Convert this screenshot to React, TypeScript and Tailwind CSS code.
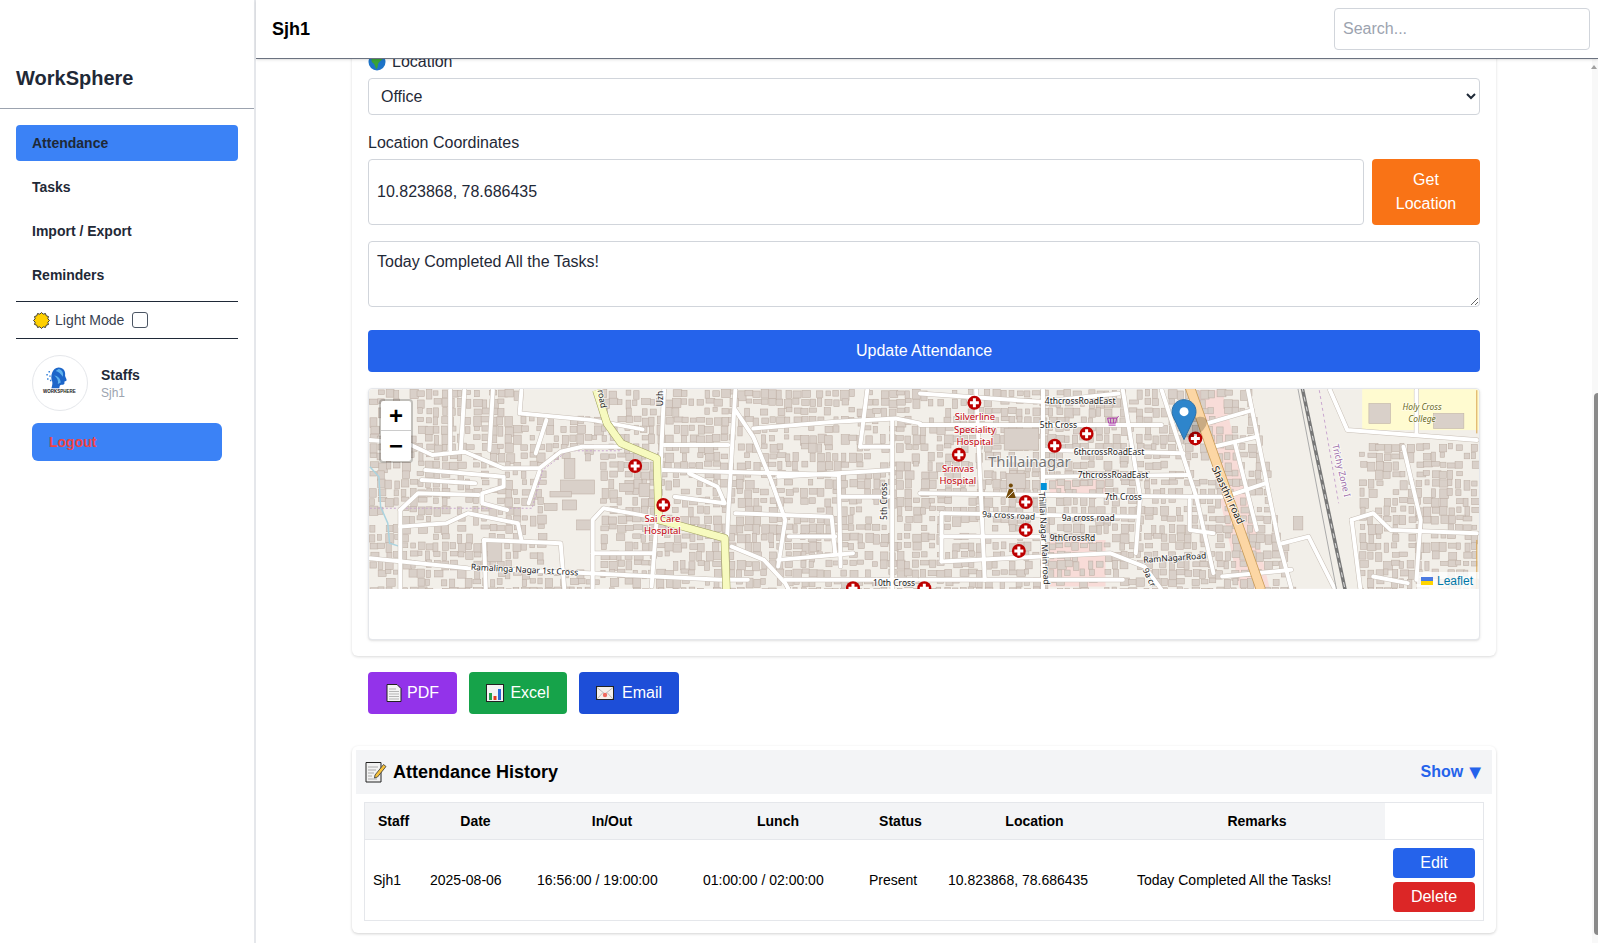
import React from "react";

const z2 = (p: number[]) => {
  const out: number[] = [];
  for (let i = 0; i < p.length; i += 2) out.push(p[i] / 2.8 - 8, p[i + 1] / 3 - 9);
  return out;
};
const z3 = (p: number[]) => {
  const out: number[] = [];
  for (let i = 0; i < p.length; i += 2) out.push(p[i] / 2.3127 + 552, p[i + 1] / 3 - 9);
  return out;
};
const box2 = (x: number, y: number, w: number, h: number) => [x / 2.8 - 8, y / 3 - 9, w / 2.8, h / 3];
const box3 = (x: number, y: number, w: number, h: number) => [x / 2.3127 + 552, y / 3 - 9, w / 2.3127, h / 3];
const toD = (p: number[]) => {
  let d = "";
  for (let i = 0; i < p.length; i += 2) d += (i === 0 ? "M" : "L") + p[i].toFixed(1) + " " + p[i + 1].toFixed(1);
  return d;
};

const roads: number[][] = [
  z2([450, 100, 650, 120, 790, 148]),
  z2([25, 180, 130, 190, 200, 225, 290, 215, 400, 265, 500, 265, 560, 215, 620, 200, 730, 200]),
  z2([25, 535, 300, 565, 640, 580, 1010, 600, 1085, 600]),
  z2([850, 195, 1030, 195]),
  z2([845, 270, 1340, 285]),
  z2([1100, 145, 1330, 125, 1500, 115, 1568, 130]),
  z2([1050, 30, 1030, 400, 1020, 630]),
  z2([1050, 90, 1100, 170, 1150, 300, 1190, 420, 1170, 560]),
  z2([1040, 500, 1130, 540, 1190, 610, 1200, 630]),
  z2([1190, 600, 1560, 600]),
  z2([1490, 120, 1490, 625]),
  z2([650, 625, 650, 420, 680, 385, 810, 410, 1020, 470]),
  z2([650, 520, 820, 520]),
  z2([345, 480, 560, 490, 570, 625]),
  z2([345, 480, 350, 625]),
  z2([110, 390, 110, 625]),
  z2([110, 440, 240, 430, 300, 400, 440, 430, 450, 480]),
  z2([250, 30, 250, 210]),
  z2([370, 30, 360, 210]),
  z2([290, 30, 280, 210]),
  z2([450, 30, 445, 100]),
  z2([520, 120, 490, 220]),
  z2([170, 300, 320, 310]),
  z2([180, 270, 400, 290, 400, 320, 340, 340, 340, 370, 410, 390]),
  z2([110, 390, 160, 340, 330, 345]),
  z2([500, 275, 470, 370]),
  z2([1050, 400, 1320, 410, 1330, 520]),
  z2([1170, 540, 1380, 520]),
  z2([1345, 350, 1480, 350]),
  z2([1400, 200, 1490, 200]),
  z2([1170, 290, 1490, 270]),
  z2([1200, 470, 1330, 470]),
  z2([850, 30, 840, 270, 815, 620]),
  z2([920, 280, 1000, 320, 1020, 370, 880, 350]),
  z2([1340, 285, 1345, 560]),
  z2([1420, 30, 1400, 200]),
  z3([0, 40, 280, 65, 460, 40]),
  z3([0, 135, 560, 135]),
  z3([0, 340, 620, 350, 700, 350]),
  z3([290, 210, 610, 220]),
  z3([290, 290, 620, 285]),
  z3([50, 400, 500, 410]),
  z3([50, 400, 50, 545]),
  z3([50, 470, 280, 470]),
  z3([50, 545, 440, 520, 520, 560, 560, 630]),
  z3([0, 600, 470, 600]),
  z3([130, 30, 150, 600]),
  z3([285, 30, 285, 625]),
  z3([470, 30, 510, 350, 500, 520]),
  z3([560, 30, 640, 350, 680, 580]),
  z3([665, 130, 770, 90]),
  z3([680, 200, 780, 170]),
  z3([720, 345, 800, 310]),
  z3([760, 30, 830, 480, 860, 625]),
  z3([730, 190, 780, 450]),
  z3([950, 30, 990, 150, 1290, 180]),
  z3([1120, 200, 1160, 420, 1150, 600]),
  z3([1000, 420, 1050, 400, 1090, 450, 1290, 460]),
  z3([1000, 420, 1020, 625]),
  z3([840, 490, 900, 470, 960, 625]),
  z3([700, 590, 860, 570]),
  z3([1050, 590, 1130, 610]),
  z3([1150, 30, 1150, 160]),
  z3([625, 360, 625, 450, 680, 460]),
];

const buildExcluded = (x: number, y: number) => {
  const railL = 881 + 43 * (y / 200);
  if (x > railL && x < 992) return true;
  if (x > 170 && x < 226 && y > 70 && y < 180) return true;
  if (x > 992 && y < 50) return true;
  if (x > 150 && x < 228 && y < 25) return true;
  return false;
};

const makeBuildings = () => {
  let seed = 4217;
  const rnd = () => {
    seed = (seed * 16807) % 2147483647;
    return seed / 2147483647;
  };
  const list: { x: number; y: number; w: number; h: number }[] = [];
  for (let y = 0; y < 200; y += 9) {
    for (let x = 0; x < 1112; x += 8) {
      if (rnd() < 0.24) continue;
      const w = 4 + rnd() * 5;
      const h = 4 + rnd() * 6;
      const bx = x + rnd() * 2;
      const by = y + rnd() * 2;
      if (buildExcluded(bx, by)) continue;
      list.push({ x: bx, y: by, w, h });
    }
  }
  return list;
};
const buildings = makeBuildings();

const bigBuildings = [
  box2(560, 300, 95, 42),
  box2(570, 235, 30, 60),
  box2(530, 335, 60, 16),
  box2(565, 360, 40, 30),
  box2(605, 420, 40, 30),
  box2(725, 310, 40, 25),
  box2(780, 310, 30, 40),
  box2(515, 370, 35, 22),
  box2(355, 485, 40, 60),
  box3(195, 145, 80, 65),
  box3(200, 280, 45, 45),
  box3(1040, 70, 50, 60),
  box3(1190, 100, 70, 45),
  box3(865, 410, 22, 40),
];

const hospitals = [
  z2([769, 258]),
  z2([848, 375]),
  z2([1380, 625]),
  z3([126, 68]),
  z3([386, 161]),
  z3([312, 197]),
  z3([90, 224]),
  z3([638, 175]),
  z3([245, 366]),
  z3([245, 450]),
  z3([229, 513]),
  z3([10, 625]),
];

const labels: { t: string; x: number; y: number; r?: number; s: number; c?: string }[] = [
  { t: "Ramalinga Nagar 1st Cross", x: 102, y: 181, r: 3, s: 8.5 },
  { t: "10th Cross", x: 505, y: 197, s: 8.5 },
  { t: "4thcrossRoadEast", x: 677, y: 15, s: 8.5 },
  { t: "5th Cross", x: 672, y: 39, s: 8.5 },
  { t: "6thcrossRoadEast", x: 706, y: 66, s: 8.5 },
  { t: "7thcrossRoadEast", x: 710, y: 89, s: 8.5 },
  { t: "7th Cross", x: 737, y: 111, s: 8.5 },
  { t: "9a cross road", x: 614, y: 128, r: 3, s: 8.5 },
  { t: "9a cross road", x: 694, y: 132, s: 8.5 },
  { t: "9thCrossRd", x: 682, y: 152, s: 8.5 },
  { t: "RamNagarRoad", x: 776, y: 174, r: -4, s: 8.5 },
  { t: "Shasthri road", x: 844, y: 79, r: 65, s: 10 },
  { t: "Thillai Nagar Main road", x: 671, y: 103, r: 87, s: 8.5 },
  { t: "5th Cross", x: 519, y: 131, r: -90, s: 8.5 },
  { t: "Uzh", x: 295, y: 17, r: -90, s: 8.5 },
  { t: "road", x: 229, y: 1, r: 80, s: 8.5 },
  { t: "9a cr", x: 775, y: 181, r: 65, s: 8.5 },
  { t: "Trichy Zone I", x: 965, y: 56, r: 77, s: 9, c: "#9a6aa8" },
];

const redLabels: { t: string; x: number; y: number }[] = [
  { t: "Silverline", x: 607, y: 31 },
  { t: "Speciality", x: 607, y: 44 },
  { t: "Hospital", x: 607, y: 56 },
  { t: "Srinvas", x: 590, y: 83 },
  { t: "Hospital", x: 590, y: 95 },
  { t: "Sai Care", x: 294, y: 133 },
  { t: "Hospital", x: 294, y: 145 },
];

const MapArt = () => (
  <svg viewBox="0 0 1112 200" className="block w-full h-full" style={{ fontFamily: "'Noto Sans', sans-serif" }}>
    <rect width="1112" height="200" fill="#f2efe9" />
    <path d={toD(z3([640, 30, 700, 30, 810, 625, 740, 625])) + "Z"} fill="#f8dcd8" />
    <path d={toD(z3([300, 300, 430, 300, 430, 340, 300, 340])) + "Z"} fill="#f8dcd8" />
    <path d={toD(z3([300, 480, 430, 480, 430, 620, 300, 620])) + "Z"} fill="#f8dcd8" />
    <rect x="995" width="117" height="41" fill="#fffbd0" />
    {buildings.map((b, i) => (
      <rect key={i} x={b.x} y={b.y} width={b.w} height={b.h} fill="#d9d0c9" stroke="#c0b2a8" strokeWidth="0.6" />
    ))}
    {bigBuildings.map((b, i) => (
      <rect key={i} x={b[0]} y={b[1]} width={b[2]} height={b[3]} fill="#d9d0c9" stroke="#c0b2a8" strokeWidth="0.6" />
    ))}
    <path d={toD(z2([25, 260, 50, 290, 55, 380, 75, 430, 80, 490, 110, 500]))} fill="none" stroke="#aad3df" strokeWidth="1.5" />
    <path d={toD(z2([25, 385, 480, 385, 510, 270, 580, 212, 730, 212]))} fill="none" stroke="#c9a7cf" strokeWidth="1" strokeDasharray="2 2" />
    <path d={toD(z3([925, 30, 970, 370]))} fill="none" stroke="#c9a7cf" strokeWidth="1" strokeDasharray="3 3" />
    {roads.map((r, i) => (
      <path key={"c" + i} d={toD(r)} fill="none" stroke="#c8bfb6" strokeWidth="5" strokeLinejoin="round" strokeLinecap="round" />
    ))}
    {roads.map((r, i) => (
      <path key={"r" + i} d={toD(r)} fill="none" stroke="#ffffff" strokeWidth="4" strokeLinejoin="round" strokeLinecap="round" />
    ))}
    <path d={toD(z2([660, 30, 690, 130, 730, 190, 830, 235, 835, 420, 1020, 475, 1025, 630]))} fill="none" stroke="#a0a060" strokeWidth="8" strokeLinejoin="round" />
    <path d={toD(z2([660, 30, 690, 130, 730, 190, 830, 235, 835, 420, 1020, 475, 1025, 630]))} fill="none" stroke="#f7fabf" strokeWidth="7" strokeLinejoin="round" />
    <path d={toD(z3([625, 20, 790, 630]))} fill="none" stroke="#c79a55" strokeWidth="10" />
    <path d={toD(z3([625, 20, 790, 630]))} fill="none" stroke="#fcd6a4" strokeWidth="8.5" />
    <path d={toD(z3([885, 20, 985, 630]))} fill="none" stroke="#777777" strokeWidth="3.5" />
    <path d={toD(z3([885, 20, 985, 630]))} fill="none" stroke="#dddddd" strokeWidth="1" strokeDasharray="5 5" />
    <path d={toD(z3([875, 20, 965, 630]))} fill="none" stroke="#aaaaaa" strokeWidth="1" />
    <path d={toD(z3([1290, 30, 1290, 160]))} fill="none" stroke="#d9a24a" strokeWidth="1" />
    <path d={toD(z3([1290, 480, 1290, 630]))} fill="none" stroke="#d9a24a" strokeWidth="1" />

    {labels.map((l, i) => (
      <text key={i} x={l.x} y={l.y} fontSize={l.s} fill={l.c || "#222"} stroke="#fff" strokeWidth="2" strokeOpacity="0.7" paintOrder="stroke" transform={l.r ? `rotate(${l.r} ${l.x} ${l.y})` : undefined}>
        {l.t}
      </text>
    ))}
    {redLabels.map((l, i) => (
      <text key={i} x={l.x} y={l.y} fontSize="9.5" textAnchor="middle" fill="#c4000c" stroke="#fff" strokeWidth="2" strokeOpacity="0.7" paintOrder="stroke">
        {l.t}
      </text>
    ))}
    <text x="620" y="78" fontSize="15" fill="#777" stroke="#fff" strokeWidth="2" strokeOpacity="0.7" paintOrder="stroke">
      Thillainagar
    </text>
    <text x="1055" y="21" fontSize="8.5" fontStyle="italic" textAnchor="middle" fill="#6a6a20" stroke="#fff" strokeWidth="1.5" strokeOpacity="0.6" paintOrder="stroke">
      Holy Cross
    </text>
    <text x="1055" y="33" fontSize="8.5" fontStyle="italic" textAnchor="middle" fill="#6a6a20" stroke="#fff" strokeWidth="1.5" strokeOpacity="0.6" paintOrder="stroke">
      College
    </text>

    {hospitals.map((h, i) => (
      <g key={i} transform={`translate(${h[0]} ${h[1]})`}>
        <circle r="7" fill="#bd0000" />
        <path d="M-1.5 -4.5H1.5V-1.5H4.5V1.5H1.5V4.5H-1.5V1.5H-4.5V-1.5H-1.5Z" fill="#fff" />
      </g>
    ))}
    {/* shop, police, bus stop */}
    <g transform="translate(740 27)" fill="none" stroke="#ac39ac" strokeWidth="1">
      <path d="M0 2H9L8 7H1ZM9 2L11 0M1 9H8M3 2V7M6 2V7" />
    </g>
    <g transform="translate(638 94)">
      <circle cx="5" cy="2.5" r="2" fill="#734a08" />
      <path d="M0 15L3 6H7L10 15Z" fill="#734a08" />
      <path d="M1 15L8 8" stroke="#fff" strokeWidth="1" />
    </g>
    <rect x="673" y="94" width="6" height="7" fill="#0092da" />

    {/* marker shadow + pin */}
    <ellipse cx="827" cy="38" rx="14" ry="8" fill="#000" opacity="0.2" transform="rotate(-35 827 38)" />
    <g transform="translate(804 10)">
      <path d="M12.5 0.5C5.6 0.5 0.5 5.8 0.5 12.5C0.5 15 1.3 16.9 2.2 18.8L12.5 40.5L22.8 18.8C23.7 16.9 24.5 15 24.5 12.5C24.5 5.8 19.4 0.5 12.5 0.5Z" fill="#2e85cb" stroke="#2a6fa8" strokeWidth="1" />
      <circle cx="12.5" cy="12.5" r="4.5" fill="#fff" />
    </g>
  </svg>
);

const Globe = () => (
  <svg viewBox="0 0 18 18" className="w-[18px] h-[18px]">
    <circle cx="9" cy="9" r="8.5" fill="#1e74c8" />
    <path d="M5 3C8 1 13 2 15 5C14 8 11 8 10 11C10 14 9 16 8 16C7 14 7 11 5 10C3 9 3 5 5 3Z" fill="#3aa336" />
  </svg>
);

const Sun = () => (
  <svg viewBox="0 0 18 18" className="w-[17px] h-[17px]">
    <path d="M9 0.5L10.8 2.3L13.2 1.6L14 4L16.4 4.8L15.7 7.2L17.5 9L15.7 10.8L16.4 13.2L14 14L13.2 16.4L10.8 15.7L9 17.5L7.2 15.7L4.8 16.4L4 14L1.6 13.2L2.3 10.8L0.5 9L2.3 7.2L1.6 4.8L4 4L4.8 1.6L7.2 2.3Z" fill="#ffd000" stroke="#333" strokeWidth="1" />
  </svg>
);

const PageIcon = () => (
  <svg viewBox="0 0 16 18" className="w-[16px] h-[18px]">
    <path d="M1 .5H11L15 4.5V17.5H1Z" fill="#f4f4f4" stroke="#222" />
    <path d="M3 5H10M3 7.5H13M3 10H13M3 12.5H13M3 15H13" stroke="#b5b5b5" />
  </svg>
);

const ChartIcon = () => (
  <svg viewBox="0 0 18 18" className="w-[18px] h-[18px]">
    <rect x=".5" y=".5" width="17" height="17" fill="#f4f4f4" stroke="#222" />
    <rect x="3" y="9" width="3" height="7" fill="#21a34a" />
    <rect x="7.5" y="12" width="3" height="4" fill="#e53b1f" />
    <rect x="12" y="5" width="3" height="11" fill="#2b6bd6" />
  </svg>
);

const MailIcon = () => (
  <svg viewBox="0 0 18 14" className="w-[18px] h-[14px]">
    <rect x=".5" y=".5" width="17" height="13" fill="#f4f0ec" stroke="#222" />
    <path d="M1 1.5L9 8L17 1.5M1 13L7 6.5M17 13L11 6.5" fill="none" stroke="#bbb" />
    <circle cx="9" cy="9" r="2.2" fill="#ee6a5f" />
  </svg>
);

const MemoIcon = () => (
  <svg viewBox="0 0 22 22" className="w-[22px] h-[22px]">
    <path d="M1 1.5H16V21H1Z" fill="#f2f2f2" stroke="#222" />
    <path d="M3 6H13M3 9H11M3 12H9M3 15H7M3 18H12" stroke="#aaa" />
    <path d="M10 14L18.5 3.5L21 5.5L12.5 16L9.5 17Z" fill="#f7c23c" stroke="#333" strokeWidth=".8" />
  </svg>
);

const LogoMark = () => (
  <svg viewBox="0 0 54 54" className="w-[54px] h-[54px]">
    <g transform="translate(4 5) scale(.72)">
      <path d="M30 9C37 9 40 15 39 20C39 22 42 26 41 27C40 28 38 28 38 29C39 32 37 33 34 33C32 33 31 35 31 38H20C21 34 22 31 21 28C18 22 21 9 30 9Z" fill="#1d66c9" />
      <path d="M30 11C35 12 37 16 36 22C33 18 30 15 26 14ZM24 20C28 20 33 24 33 30L29 32C30 27 28 23 24 20Z" fill="#5fb2ee" />
      <path d="M16 14h2v2h-2zM13 18h2v2h-2zM17 20h2v2h-2zM14 24h2v2h-2zM18 26h2v2h-2z" fill="#2b7bd8" />
    </g>
  </svg>
);

const navItems = ["Tasks", "Import / Export", "Reminders"];

const App = () => {
  return (
    <div className="flex h-[943px] w-[1598px] overflow-hidden bg-white text-[#1f2937] font-['Liberation_Sans',Arial,sans-serif]">
      <aside className="w-[256px] shrink-0 border-r-2 border-[#e5e7eb]">
        <div className="h-[109px] flex items-end pl-4 pb-4 border-b border-[#9ca3af]">
          <h1 className="text-[20px] leading-7 font-bold">WorkSphere</h1>
        </div>
        <div className="px-4 pt-4">
          <div className="flex flex-col gap-2">
            <div className="h-9 flex items-center pl-4 bg-[#3b82f6] rounded text-sm font-bold">Attendance</div>
            {navItems.map((n) => (
              <div key={n} className="h-9 flex items-center pl-4 text-sm font-bold">
                {n}
              </div>
            ))}
          </div>
          <div className="mt-2 h-[38px] border-y border-[#1f2937] flex items-center pl-[17px] gap-[5px] text-sm text-[#374151]">
            <Sun />
            <span>Light Mode</span>
            <span className="ml-[3px] w-[16px] h-[16px] rounded-[3px] border border-[#4b5563] bg-white" />
          </div>
          <div className="mt-4 pl-4 flex items-center gap-[13px]">
            <div className="relative w-[56px] h-[56px] rounded-full border border-[#e5e7eb] flex items-center justify-center">
              <LogoMark />
              <span className="absolute left-[10px] top-[33px] text-[4.5px] leading-[6px] font-bold text-[#222]">WORKSPHERE</span>
            </div>
            <div>
              <div className="text-sm leading-5 font-bold">Staffs</div>
              <div className="text-xs leading-4 text-[#9ca3af]">Sjh1</div>
            </div>
          </div>
          <div className="mt-3 ml-4 w-[190px] h-[38px] rounded-md bg-[#3b82f6] flex items-center pl-[17px] text-sm font-bold text-[#ef4444]">Logout</div>
        </div>
      </aside>

      <div className="flex-1 flex flex-col min-w-0">
        <header className="h-[59px] shrink-0 z-10 bg-white border-b border-[#6b7280] flex items-center justify-between pl-4 pr-2 shadow-sm">
          <div className="text-[18px] font-bold text-black">Sjh1</div>
          <input placeholder="Search..." className="w-[256px] h-[42px] border border-[#d1d5db] rounded px-2 text-base placeholder:text-[#9ca3af]" />
        </header>

        <div className="relative flex-1 overflow-hidden">
          <main className="pl-[96px] -mt-[9px]">
            <section className="w-[1144px] rounded-md bg-white p-4 pt-0 shadow-[0_1px_3px_rgba(0,0,0,0.15)]">
              <label className="h-[24px] flex items-center gap-[6px] text-base text-[#1f2937]">
                <Globe />
                Location
              </label>
              <select className="mt-[4px] w-full h-[37px] border border-[#d1d5db] rounded bg-white px-2 text-base">
                <option>Office</option>
              </select>
              <div className="mt-[16px] leading-6 text-base">Location Coordinates</div>
              <div className="mt-[4px] flex gap-2">
                <input readOnly value="10.823868, 78.686435" className="flex-1 h-[66px] border border-[#d1d5db] rounded px-2 text-base" />
                <button className="w-[108px] h-[66px] rounded bg-[#f97316] text-white text-base leading-6 px-4">Get Location</button>
              </div>
              <textarea readOnly value="Today Completed All the Tasks!" className="mt-4 block w-full h-[66px] border border-[#d1d5db] rounded px-2 py-2 text-base" />
              <button className="mt-[23px] block w-full h-[42px] rounded bg-[#2563eb] text-white text-base">Update Attendance</button>
              <div className="mt-[16px] h-[252px] rounded border border-[#e5e7eb] shadow-sm bg-white">
                <div className="relative h-[200px] overflow-hidden rounded-t">
                  <MapArt />
                  <div className="absolute left-[10px] top-[10px] w-[34px] rounded border-2 border-black/20 bg-clip-padding bg-white flex flex-col font-bold text-[24px] leading-[30px] text-black text-center">
                    <div className="h-[30px] border-b border-[#ccc]">+</div>
                    <div className="h-[30px]">−</div>
                  </div>
                  <div className="absolute right-0 bottom-0 h-[17px] pl-[4px] pr-[6px] bg-white/80 flex items-center gap-[4px] text-[12px] font-bold text-[#0078a8]">
                    <svg viewBox="0 0 12 8" className="w-[12px] h-[8px]">
                      <rect width="12" height="4" fill="#4c7be1" />
                      <rect y="4" width="12" height="4" fill="#ffd500" />
                    </svg>
                    <span className="font-normal">Leaflet</span>
                  </div>
                </div>
              </div>
            </section>

            <div className="mt-4 ml-4 flex gap-3">
              <button className="h-[42px] w-[89px] rounded bg-[#9333ea] text-white text-base flex items-center justify-center gap-[5px]">
                <PageIcon />
                PDF
              </button>
              <button className="h-[42px] w-[98px] rounded bg-[#16a34a] text-white text-base flex items-center justify-center gap-[6px]">
                <ChartIcon />
                Excel
              </button>
              <button className="h-[42px] w-[100px] rounded bg-[#1d4ed8] text-white text-base flex items-center justify-center gap-[8px]">
                <MailIcon />
                Email
              </button>
            </div>

            <section className="mt-8 w-[1144px] h-[187px] rounded-md bg-white p-1 shadow-[0_1px_3px_rgba(0,0,0,0.18)]">
              <div className="h-[44px] bg-[#f3f4f6] flex items-center justify-between pl-[9px] pr-[7px]">
                <div className="flex items-center gap-[6px] text-[18px] font-bold text-black">
                  <MemoIcon />
                  Attendance History
                </div>
                <div className="flex items-center gap-[2px] text-base font-bold text-[#2563eb]">
                  Show
                  <span className="text-[20px] leading-none">▼</span>
                </div>
              </div>
              <div className="mt-2 mx-2 border border-[#e5e7eb]">
                <table className="w-full table-fixed text-sm text-black border-collapse">
                  <colgroup>
                    <col className="w-[57px]" />
                    <col className="w-[107px]" />
                    <col className="w-[166px]" />
                    <col className="w-[166px]" />
                    <col className="w-[79px]" />
                    <col className="w-[189px]" />
                    <col className="w-[256px]" />
                    <col />
                  </colgroup>
                  <thead>
                    <tr className="h-[36px] border-b border-[#e5e7eb] font-bold">
                      {["Staff", "Date", "In/Out", "Lunch", "Status", "Location", "Remarks"].map((h) => (
                        <th key={h} className="bg-[#f3f4f6] font-bold">
                          {h}
                        </th>
                      ))}
                      <th />
                    </tr>
                  </thead>
                  <tbody>
                    <tr className="h-[81px]">
                      <td className="px-2">Sjh1</td>
                      <td className="px-2">2025-08-06</td>
                      <td className="px-2">16:56:00 / 19:00:00</td>
                      <td className="px-2">01:00:00 / 02:00:00</td>
                      <td className="px-2">Present</td>
                      <td className="px-2">10.823868, 78.686435</td>
                      <td className="px-2">Today Completed All the Tasks!</td>
                      <td className="px-2">
                        <div className="flex flex-col gap-1">
                          <button className="h-[30px] rounded bg-[#2563eb] text-white text-base">Edit</button>
                          <button className="h-[30px] rounded bg-[#dc2626] text-white text-base">Delete</button>
                        </div>
                      </td>
                    </tr>
                  </tbody>
                </table>
              </div>
            </section>
          </main>

          {/* scrollbar */}
          <div className="absolute right-0 top-0 bottom-0 w-[6px] bg-[#f8f8f8]">
            <div className="absolute right-0 top-[334px] w-[4px] h-[542px] rounded-l bg-[#8a8a8a]" />
            <div className="absolute right-[1px] top-[6px] w-0 h-0 border-x-[3px] border-x-transparent border-b-[4px] border-b-[#a0a0a0]" />
          </div>
        </div>
      </div>
    </div>
  );
};

export default App;
